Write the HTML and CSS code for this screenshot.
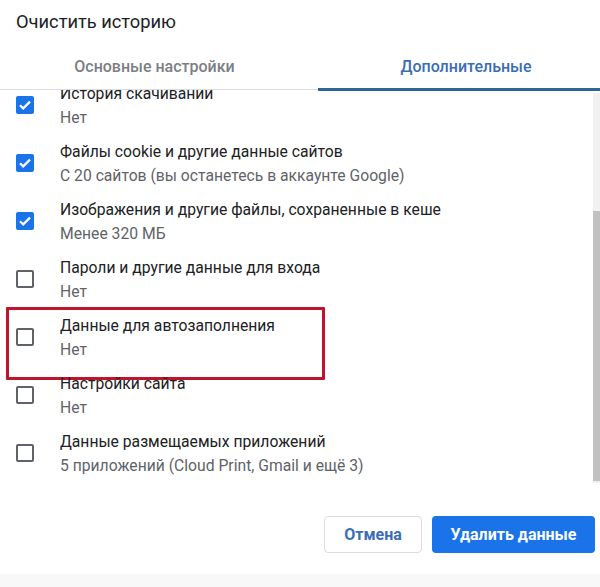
FILE: index.html
```html
<!DOCTYPE html>
<html lang="ru">
<head>
<meta charset="utf-8">
<title>Очистить историю</title>
<link rel="stylesheet" href="styles.css">
</head>
<body>
<div class="dialog">
  <div class="title">Очистить историю</div>
  <div class="tabs">
    <div class="tab tab-basic">Основные настройки</div>
    <div class="tab tab-adv active">Дополнительные</div>
  </div>
  <div class="scroll">
    <div class="list">
      <div class="row">
        <span class="cb checked"><svg viewBox="0 0 18 18"><path d="M4 9.2l3.2 3.2L14 5.6"/></svg></span>
        <div class="text"><div class="t">История скачиваний</div><div class="s">Нет</div></div>
      </div>
      <div class="row">
        <span class="cb checked"><svg viewBox="0 0 18 18"><path d="M4 9.2l3.2 3.2L14 5.6"/></svg></span>
        <div class="text"><div class="t">Файлы cookie и другие данные сайтов</div><div class="s">С 20 сайтов (вы останетесь в аккаунте Google)</div></div>
      </div>
      <div class="row">
        <span class="cb checked"><svg viewBox="0 0 18 18"><path d="M4 9.2l3.2 3.2L14 5.6"/></svg></span>
        <div class="text"><div class="t">Изображения и другие файлы, сохраненные в кеше</div><div class="s">Менее 320 МБ</div></div>
      </div>
      <div class="row">
        <span class="cb"></span>
        <div class="text"><div class="t">Пароли и другие данные для входа</div><div class="s">Нет</div></div>
      </div>
      <div class="row highlighted">
        <span class="cb"></span>
        <div class="text"><div class="t">Данные для автозаполнения</div><div class="s">Нет</div></div>
        <div class="redbox"></div>
      </div>
      <div class="row">
        <span class="cb"></span>
        <div class="text"><div class="t">Настройки сайта</div><div class="s">Нет</div></div>
      </div>
      <div class="row">
        <span class="cb"></span>
        <div class="text"><div class="t">Данные размещаемых приложений</div><div class="s">5 приложений (Cloud Print, Gmail и ещё 3)</div></div>
      </div>
    </div>
    <div class="scrollbar"><div class="thumb"></div></div>
  </div>
  <div class="footer">
    <button class="btn btn-cancel">Отмена</button>
    <button class="btn btn-primary">Удалить данные</button>
  </div>
  <div class="bottom-band"></div>
</div>
</body>
</html>
```
FILE: styles.css
```css
html, body {
  margin: 0;
  padding: 0;
  background: #fff;
}
body {
  font-family: Roboto, "Liberation Sans", Arial, sans-serif;
  color: #202124;
  width: 600px;
  height: 587px;
  overflow: hidden;
}
.dialog {
  display: flex;
  flex-direction: column;
  height: 587px;
}
.title {
  font-size: 18.3px;
  line-height: 24px;
  padding: 10px 16px 0 16px;
  height: 36px;
  box-sizing: border-box;
  color: #202124;
  flex: none;
}
.tabs {
  display: flex;
  border-bottom: 1px solid #dadce0;
  box-sizing: border-box;
  height: 54px;
  flex: none;
}
.tab {
  font-size: 16px;
  font-weight: 500;
  line-height: 20px;
  padding-top: 21px;
  box-sizing: border-box;
  text-align: center;
}
.tab-basic {
  width: 318px;
  padding-right: 9px;
  color: #7b7f84;
}
.tab-adv {
  width: 282px;
  padding-left: 14px;
  color: #3a6db6;
  border-bottom: 3px solid #2d6597;
  margin-bottom: -2px;
}
.scroll {
  position: relative;
  height: 406px;
  overflow: hidden;
  flex: none;
}
.list {
  margin-top: -14px;
}
.row {
  position: relative;
  display: flex;
  align-items: center;
  height: 58px;
  padding-left: 16px;
  gap: 26px;
}
.cb {
  width: 18px;
  height: 18px;
  box-sizing: border-box;
  border: 2px solid #5f6368;
  border-radius: 2px;
  flex: none;
}
.cb.checked {
  background: #1a73e8;
  border-color: #1a73e8;
  display: flex;
}
.cb svg {
  width: 18px;
  height: 18px;
  margin: -2px;
  fill: none;
  stroke: #fff;
  stroke-width: 2.2;
}
.text {
  display: flex;
  flex-direction: column;
}
.t {
  font-size: 15.7px;
  line-height: 25px;
  color: #202124;
}
.s {
  font-size: 15.7px;
  line-height: 24px;
  color: #5f6368;
}
.redbox {
  position: absolute;
  left: 6px;
  top: -1px;
  width: 319px;
  height: 73px;
  box-sizing: border-box;
  border: 3px solid #c0132c;
  border-radius: 1px;
}
.scrollbar {
  position: absolute;
  right: 0;
  top: 3px;
  width: 7px;
  height: 390px;
  background: #f1f1f1;
}
.thumb {
  margin-top: 118px;
  height: 270px;
  background: #c1c1c1;
}
.footer {
  display: flex;
  justify-content: flex-end;
  gap: 10px;
  padding: 20px 5px 0 0;
  height: 78px;
  box-sizing: border-box;
  flex: none;
}
.btn {
  height: 37px;
  border-radius: 4px;
  font-family: Roboto, "Liberation Sans", Arial, sans-serif;
  font-size: 16px;
  font-weight: 700;
  cursor: pointer;
}
.btn-cancel {
  width: 98px;
  background: #fff;
  border: 1px solid #dadce0;
  color: #3a6db6;
}
.btn-primary {
  width: 163px;
  background: #1a73e8;
  border: none;
  color: #fff;
}
.bottom-band {
  flex: 1;
  background: #f8f8f8;
}
```
